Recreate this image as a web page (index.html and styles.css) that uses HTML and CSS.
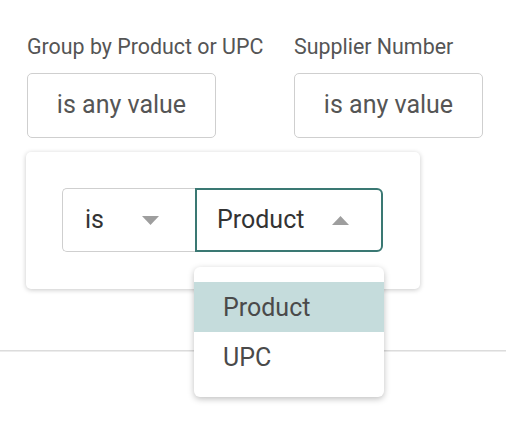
FILE: index.html
```html
<!DOCTYPE html>
<html>
<head>
<meta charset="utf-8">
<link rel="stylesheet" href="styles.css">
</head>
<body>
<div class="page">
  <div class="filters">
    <div class="filter col1">
      <div class="label">Group by Product or UPC</div>
      <div class="value-btn">is any value</div>
    </div>
    <div class="filter">
      <div class="label">Supplier Number</div>
      <div class="value-btn">is any value</div>
    </div>
  </div>
  <div class="divider"></div>

  <div class="popover">
    <div class="segment">
      <div class="seg seg-op">
        <span>is</span>
        <svg class="caret" width="17" height="9" viewBox="0 0 17 9"><path d="M0 0H17L8.5 9Z" fill="#9e9e9e"/></svg>
      </div>
      <div class="seg seg-val">
        <span>Product</span>
        <svg class="caret" width="17" height="9" viewBox="0 0 17 9"><path d="M0 9H17L8.5 0Z" fill="#9e9e9e"/></svg>
      </div>
    </div>
  </div>

  <div class="menu">
    <div class="item active">Product</div>
    <div class="item">UPC</div>
  </div>
</div>
</body>
</html>
```
FILE: styles.css
```css
html, body {
  margin: 0;
  padding: 0;
  background: #fff;
}
body {
  font-family: Roboto, "Noto Sans", Arial, sans-serif;
  width: 506px;
  height: 430px;
  overflow: hidden;
}
.page {
  position: relative;
  width: 506px;
  height: 430px;
}
.filters {
  display: flex;
  padding: 34px 0 0 27px;
}
.filter {
  display: flex;
  flex-direction: column;
}
.col1 {
  width: 267px;
}
.label {
  font-size: 21.4px;
  line-height: 26px;
  color: #555;
  height: 26px;
  margin-bottom: 13px;
  white-space: nowrap;
}
.value-btn {
  box-sizing: border-box;
  width: 189px;
  height: 65px;
  border: 1px solid #cfcfcf;
  border-radius: 5px;
  display: flex;
  align-items: center;
  justify-content: center;
  font-size: 25px;
  color: #555;
  padding-bottom: 2px;
}
.divider {
  margin-top: 212px;
  border-top: 1px solid #dcdcdc;
  height: 1px;
  background: #ececec;
}
.popover {
  position: absolute;
  left: 26px;
  top: 152px;
  width: 394px;
  height: 137px;
  box-sizing: border-box;
  padding: 36px 0 0 36px;
  background: #fff;
  border-radius: 5px;
  box-shadow: 0 1px 5px rgba(0, 0, 0, 0.22);
}
.segment {
  display: flex;
  height: 64px;
}
.seg {
  box-sizing: border-box;
  height: 64px;
  display: flex;
  align-items: center;
  justify-content: space-between;
  font-size: 25px;
  color: #333;
}
.seg-op {
  width: 133px;
  border: 1px solid #cfcfcf;
  border-right: none;
  border-radius: 5px 0 0 5px;
  padding: 0 36px 0 22px;
}
.seg-val {
  width: 188px;
  border: 2px solid #3a7873;
  border-radius: 0 6px 6px 0;
  padding: 0 32px 0 20px;
}
.seg span {
  padding-bottom: 1px;
}
.caret {
  display: block;
}
.menu {
  position: absolute;
  left: 194px;
  top: 267px;
  width: 190px;
  height: 130px;
  box-sizing: border-box;
  padding: 15px 0;
  background: #fff;
  border-radius: 6px;
  box-shadow: 0 2px 6px rgba(0, 0, 0, 0.25);
}
.item {
  height: 50px;
  display: flex;
  align-items: center;
  padding-left: 29px;
  font-size: 25px;
  color: #4a4a4a;
}
.item.active {
  background: #c5dcdc;
}
```
